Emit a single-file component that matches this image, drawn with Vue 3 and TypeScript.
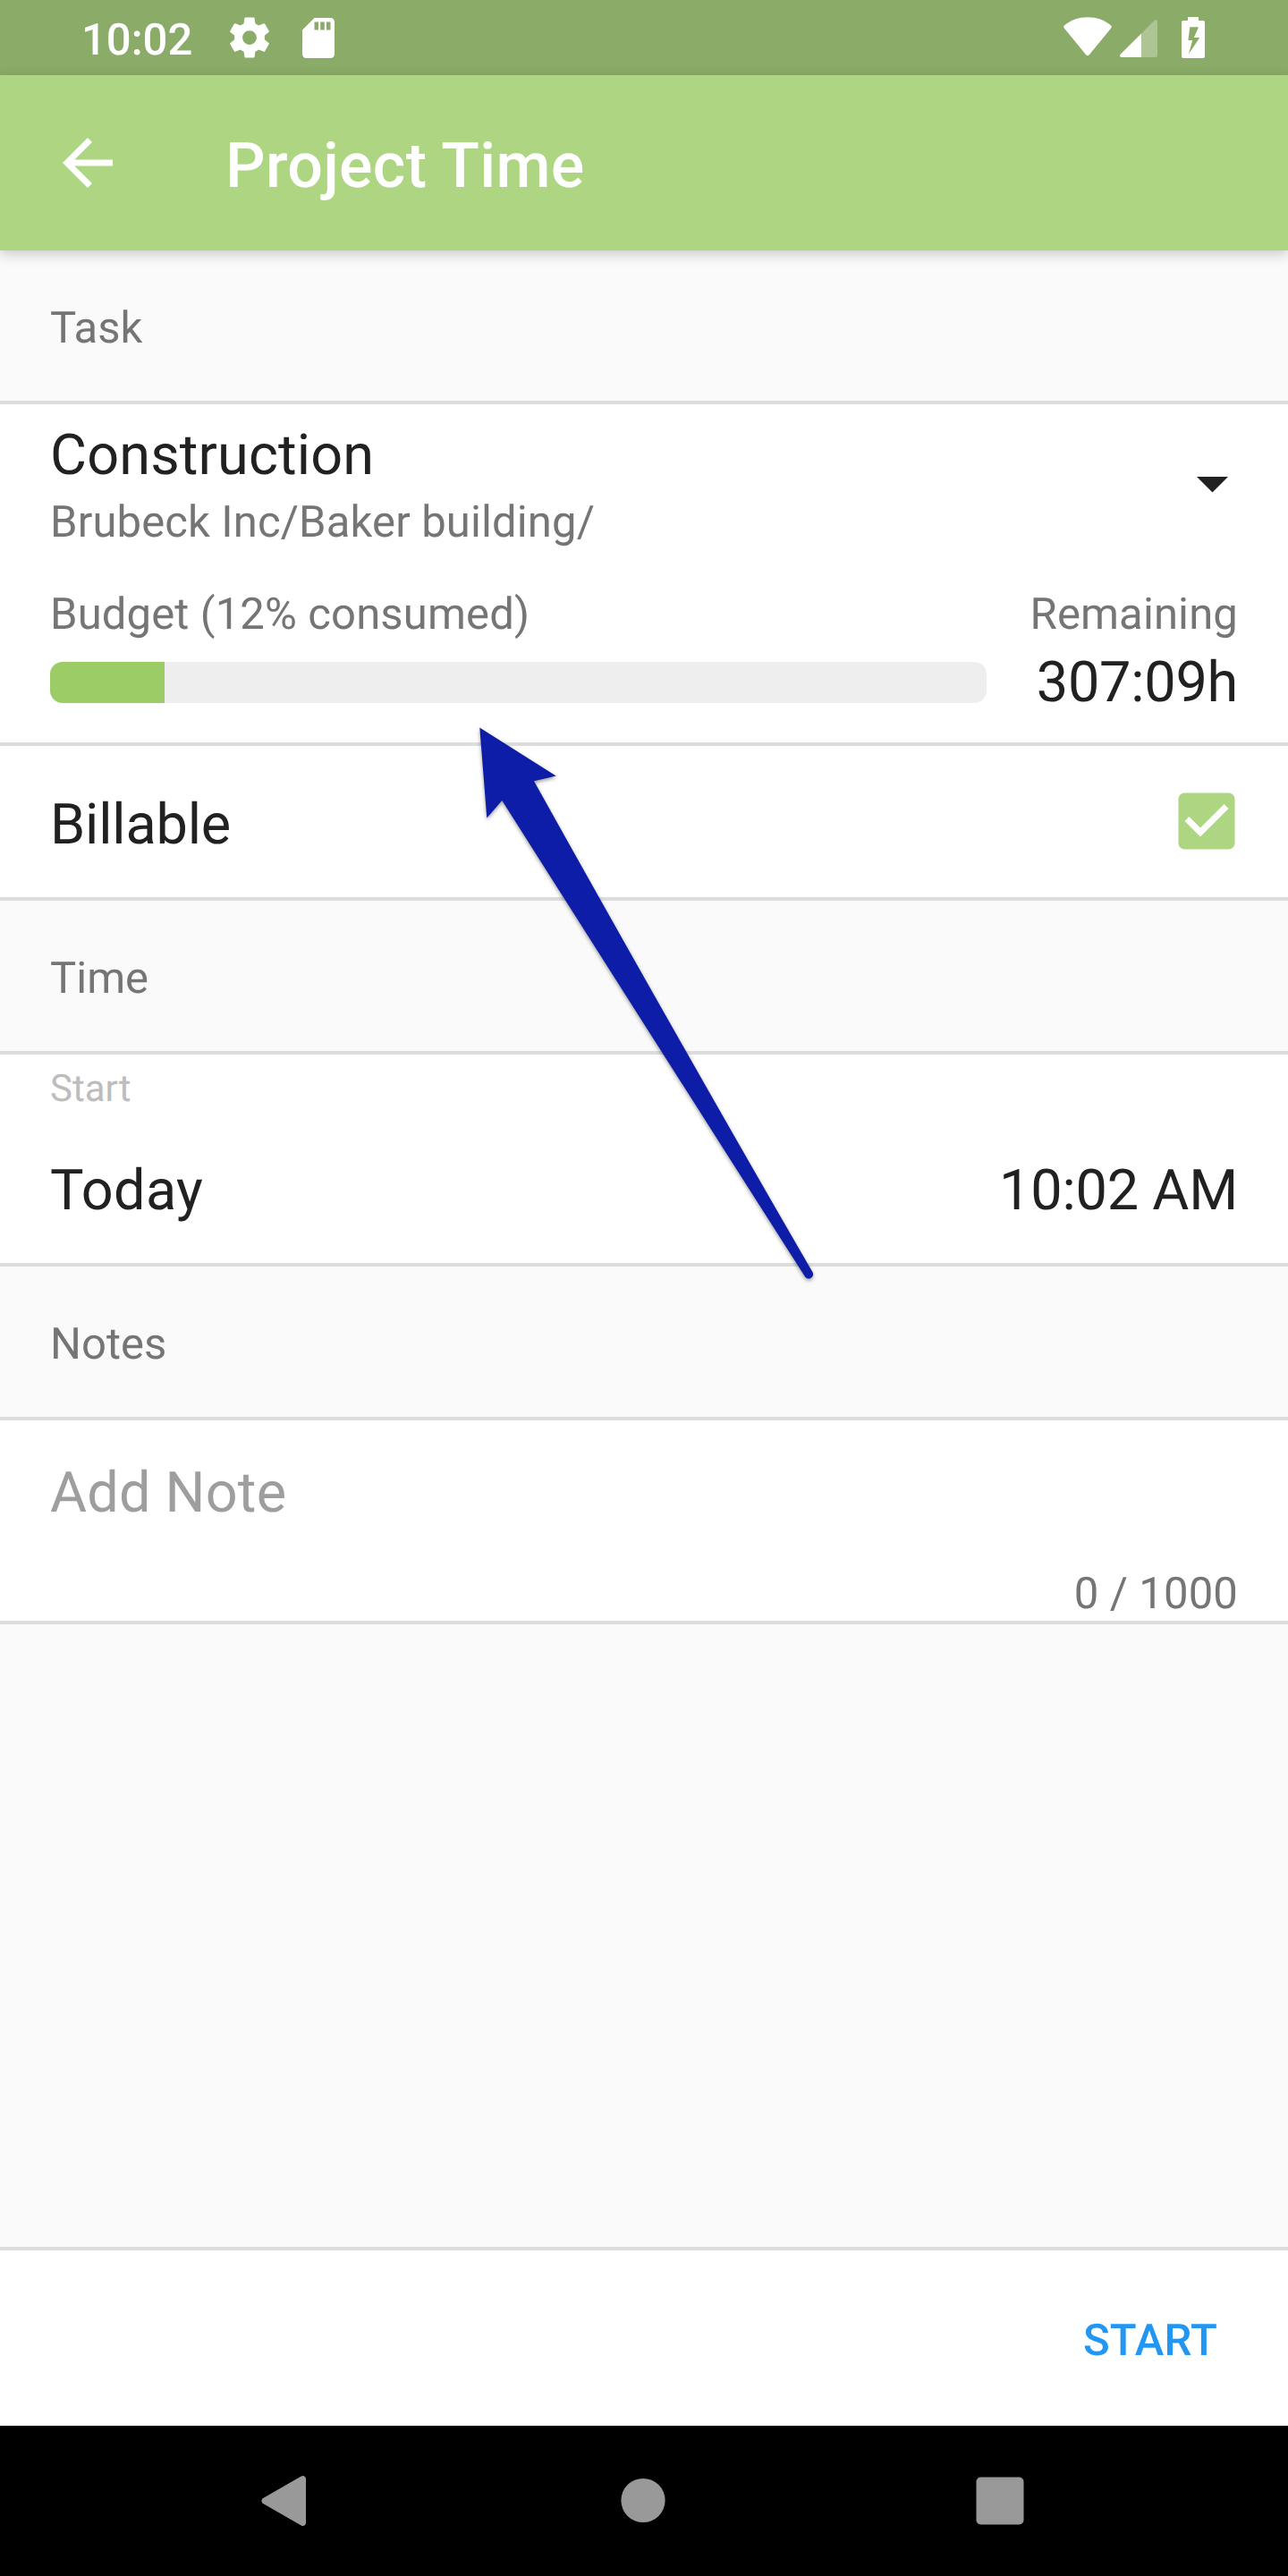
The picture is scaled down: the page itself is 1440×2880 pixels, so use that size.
<script setup lang="ts">
interface ProjectTask {
  name: string
  path: string
  consumedPercent: number
  barPercent: number
  remaining: string
}

const clock = '10:02'
const task: ProjectTask = {
  name: 'Construction',
  path: 'Brubeck Inc/Baker building/',
  consumedPercent: 12,
  barPercent: 12.25,
  remaining: '307:09h',
}
const start = { day: 'Today', time: '10:02 AM' }
const noteLength = 0
const noteLimit = 1000
</script>

<template>
  <div class="screen">
    <header class="status">
      <span class="clock">{{ clock }}</span>
      <svg class="gear" viewBox="0 0 24 24"><path d="M19.43 12.98c.04-.32.07-.64.07-.98s-.03-.66-.07-.98l2.11-1.65c.19-.15.24-.42.12-.64l-2-3.46c-.12-.22-.39-.3-.61-.22l-2.49 1c-.52-.4-1.08-.73-1.69-.98l-.38-2.65C14.46 2.18 14.25 2 14 2h-4c-.25 0-.46.18-.49.42l-.38 2.65c-.61.25-1.17.59-1.69.98l-2.49-1c-.23-.09-.49 0-.61.22l-2 3.46c-.13.22-.07.49.12.64l2.11 1.65c-.04.32-.07.65-.07.98s.03.66.07.98l-2.11 1.65c-.19.15-.24.42-.12.64l2 3.46c.12.22.39.3.61.22l2.49-1c.52.4 1.08.73 1.69.98l.38 2.65c.03.24.24.42.49.42h4c.25 0 .46-.18.49-.42l.38-2.65c.61-.25 1.17-.59 1.69-.98l2.49 1c.23.09.49 0 .61-.22l2-3.46c.12-.22.07-.49-.12-.64l-2.11-1.65zM12 15.5c-1.93 0-3.5-1.57-3.5-3.5s1.57-3.5 3.5-3.5 3.5 1.57 3.5 3.5-1.57 3.5-3.5 3.5z" /></svg>
      <svg class="sd" viewBox="4 2 16 20"><path d="M18 2h-8L4.02 8 4 20c0 1.1.9 2 2 2h12c1.1 0 2-.9 2-2V4c0-1.1-.9-2-2-2zm-6 6h-2V4h2v4zm3 0h-2V4h2v4zm3 0h-2V4h2v4z" /></svg>
      <span class="grow"></span>
      <svg class="wifi" viewBox="0 0 54 44"><path d="M1.2 9.2C8 3.600 17 .3 27 .3s19 3.300 25.800 8.900c1.300 1.100 1.300 2.300.4 3.400L28.800 42.200c-1 1.200-2.600 1.200-3.600 0L.8 12.600C-.1 11.500-.1 10.300 1.200 9.200z" /></svg>
      <svg class="signal" viewBox="0 0 42 42"><path opacity=".3" d="M24 15.500 38.300 1.100C39.800-.4 42 .4 42 2.500V40a2 2 0 0 1-2 2H24z" /><path d="M24 15.500V42H2.200C.1 42-.6 40 .8 38.600z" /></svg>
      <svg class="battery" viewBox="0 0 26 46"><path fill-rule="evenodd" d="M7 0h12v4h5a2 2 0 0 1 2 2v38a2 2 0 0 1-2 2H2a2 2 0 0 1-2-2V6a2 2 0 0 1 2-2h5zM9.300 11.300 7.400 26h4.800L8 41.300 20.300 23h-6.500L19 11.300z" /></svg>
    </header>

    <div class="appbar">
      <svg class="back" viewBox="0 0 24 24"><path d="M20 11H7.830l5.590-5.590L12 4l-8 8 8 8 1.410-1.410L7.830 13H20v-2z" /></svg>
      <h1>Project Time</h1>
    </div>

    <main>
      <h2 class="section">Task</h2>

      <section class="task">
        <div class="picker">
          <div>
            <div class="big name">{{ task.name }}</div>
            <div class="small">{{ task.path }}</div>
          </div>
          <svg class="caret" viewBox="0 0 35 17.500"><path d="M0 0h35L17.500 17.500z" /></svg>
        </div>
        <div class="budget">
          <div class="consumed">
            <div class="small">Budget ({{ task.consumedPercent }}% consumed)</div>
            <div class="track"><div class="fill" :style="{ width: task.barPercent + '%' }"></div></div>
          </div>
          <div class="remaining">
            <div class="small">Remaining</div>
            <div class="big">{{ task.remaining }}</div>
          </div>
        </div>
      </section>

      <section class="billable">
        <span class="big">Billable</span>
        <svg class="check" viewBox="0 0 24 24"><path d="M19 3H5c-1.110 0-2 .9-2 2v14c0 1.100.89 2 2 2h14c1.110 0 2-.9 2-2V5c0-1.100-.89-2-2-2zm-9 14l-5-5 1.410-1.410L10 14.170l7.590-7.590L19 8l-9 9z" /></svg>
      </section>

      <h2 class="section">Time</h2>

      <section class="start">
        <div class="label">Start</div>
        <div class="when">
          <span class="big day">{{ start.day }}</span>
          <span class="big time">{{ start.time }}</span>
        </div>
      </section>

      <h2 class="section">Notes</h2>

      <section class="notes">
        <div class="big placeholder">Add Note</div>
        <div class="small counter">{{ noteLength }} / {{ noteLimit }}</div>
      </section>
    </main>

    <footer class="actions"><span class="action">START</span></footer>

    <nav class="nav">
      <svg viewBox="0 0 60 60"><path d="M5.700 27.200 48.700 2.600c2.400-1.400 5.300.1 5.300 3v48.800c0 2.900-2.900 4.400-5.300 3L5.700 32.800c-1.600-1.100-1.600-4.500 0-5.600z" /></svg>
      <svg viewBox="0 0 60 60"><circle cx="31" cy="29.500" r="24.600" /></svg>
      <svg viewBox="0 0 60 60"><rect x="3.500" y="3.500" width="53" height="53" rx="5" /></svg>
    </nav>

    <svg class="pointer" viewBox="0 0 390 630"><path d="M6.300 3.400 91.700 57.600 67 63.200Q233 361 378.600 612.500A5 5 0 0 1 370.300 617.800Q200 351 31.300 85L14.300 104.400z" /></svg>
  </div>
</template>

<style>
body { margin: 0; background: #fafafa; }
</style>

<style scoped>
.screen {
  position: relative;
  display: flex;
  flex-direction: column;
  width: 1440px;
  height: 2880px;
  overflow: hidden;
  background: #fafafa;
  color: #212121;
  font-family: Roboto, "Liberation Sans", sans-serif;
  font-weight: 400;
  text-rendering: geometricPrecision;
}
svg { display: block; flex: none; fill: #fff; }
.status {
  display: flex;
  flex: none;
  box-sizing: border-box;
  height: 84px;
  padding: 0 93px 0 91px;
  background: #8bab68;
}
.clock {
  width: 161px;
  padding-top: 13px;
  color: #fff;
  font-size: 49px;
  font-weight: 500;
  line-height: 64px;
  white-space: nowrap;
}
.gear { width: 54px; height: 54px; margin-top: 15px; }
.sd { width: 36px; height: 45px; margin: 20px 0 0 32px; }
.grow { flex: 1; }
.wifi { width: 54px; height: 44px; margin-top: 19px; }
.signal { width: 42px; height: 42px; margin: 22px 0 0 9px; }
.battery { width: 26px; height: 46px; margin: 19px 0 0 27px; }
.appbar {
  position: relative;
  display: flex;
  flex: none;
  align-items: center;
  height: 196px;
  padding-left: 56px;
  background: #aed581;
  box-shadow: 0 4px 14px rgba(0, 0, 0, 0.2);
}
.back { width: 84px; height: 84px; }
h1 {
  margin: 7px 0 0 112px;
  color: #fff;
  font-size: 70px;
  font-weight: 500;
  letter-spacing: 0.3px;
  line-height: 84px;
}
main { flex: 1; }
.section {
  box-sizing: border-box;
  height: 172px;
  margin: 0;
  padding: 3px 56px 0;
  border-bottom: 4px solid #dcdcdc;
  color: #757575;
  font-size: 49px;
  font-weight: 400;
  line-height: 168px;
}
section {
  box-sizing: border-box;
  padding: 0 56px;
  border-bottom: 4px solid #dcdcdc;
  background: #fff;
}
.big { font-size: 63px; line-height: 74px; white-space: nowrap; }
.small {
  color: #757575;
  font-size: 49px;
  letter-spacing: 0.13px;
  line-height: 58px;
  white-space: nowrap;
}
.task { height: 382px; padding-top: 21px; }
.picker { display: flex; justify-content: space-between; }
.name { margin-bottom: 8px; letter-spacing: 0.14px; }
.caret { width: 35px; height: 17.5px; margin: 60px 11px 0 0; fill: #212121; }
.budget { display: flex; justify-content: space-between; margin-top: 45px; }
.consumed { width: 1047px; }
.track {
  height: 46px;
  margin-top: 24px;
  overflow: hidden;
  border-radius: 14px;
  background: #eee;
}
.fill { height: 100%; background: #9ccc65; }
.remaining { text-align: right; }
.remaining .big { margin-top: 11px; letter-spacing: -0.25px; }
.billable {
  display: flex;
  justify-content: space-between;
  height: 173px;
  padding: 0 49px 0 56px;
}
.billable .big { margin-top: 52px; letter-spacing: -0.2px; }
.check { width: 84px; height: 84px; margin-top: 42px; fill: #aed581; }
.start { height: 237px; padding-top: 14px; }
.label { color: #bdbdbd; font-size: 42px; line-height: 50px; }
.when { display: flex; justify-content: space-between; margin-top: 52px; }
.day { letter-spacing: 0.3px; }
.time { letter-spacing: -0.2px; }
.notes { height: 228px; padding-top: 45px; }
.placeholder { color: #9e9e9e; letter-spacing: 0.2px; }
.counter { margin-top: 46px; text-align: right; }
.actions {
  display: flex;
  flex: none;
  box-sizing: border-box;
  justify-content: flex-end;
  height: 200px;
  padding: 72px 79px 0 0;
  border-top: 4px solid #dcdcdc;
  background: #fff;
}
.action {
  color: #2196f3;
  font-size: 49px;
  font-weight: 500;
  letter-spacing: 0.25px;
  line-height: 58px;
}
.nav {
  display: flex;
  flex: none;
  box-sizing: border-box;
  align-items: center;
  justify-content: space-between;
  height: 168px;
  padding: 0 292px 0 288px;
  background: #000;
}
.nav svg { width: 60px; height: 60px; fill: #999; }
.pointer {
  position: absolute;
  top: 810px;
  left: 530px;
  width: 390px;
  height: 630px;
  fill: #0d1da8;
  filter: drop-shadow(0 2px 2px rgba(0, 0, 0, 0.4));
}
</style>
